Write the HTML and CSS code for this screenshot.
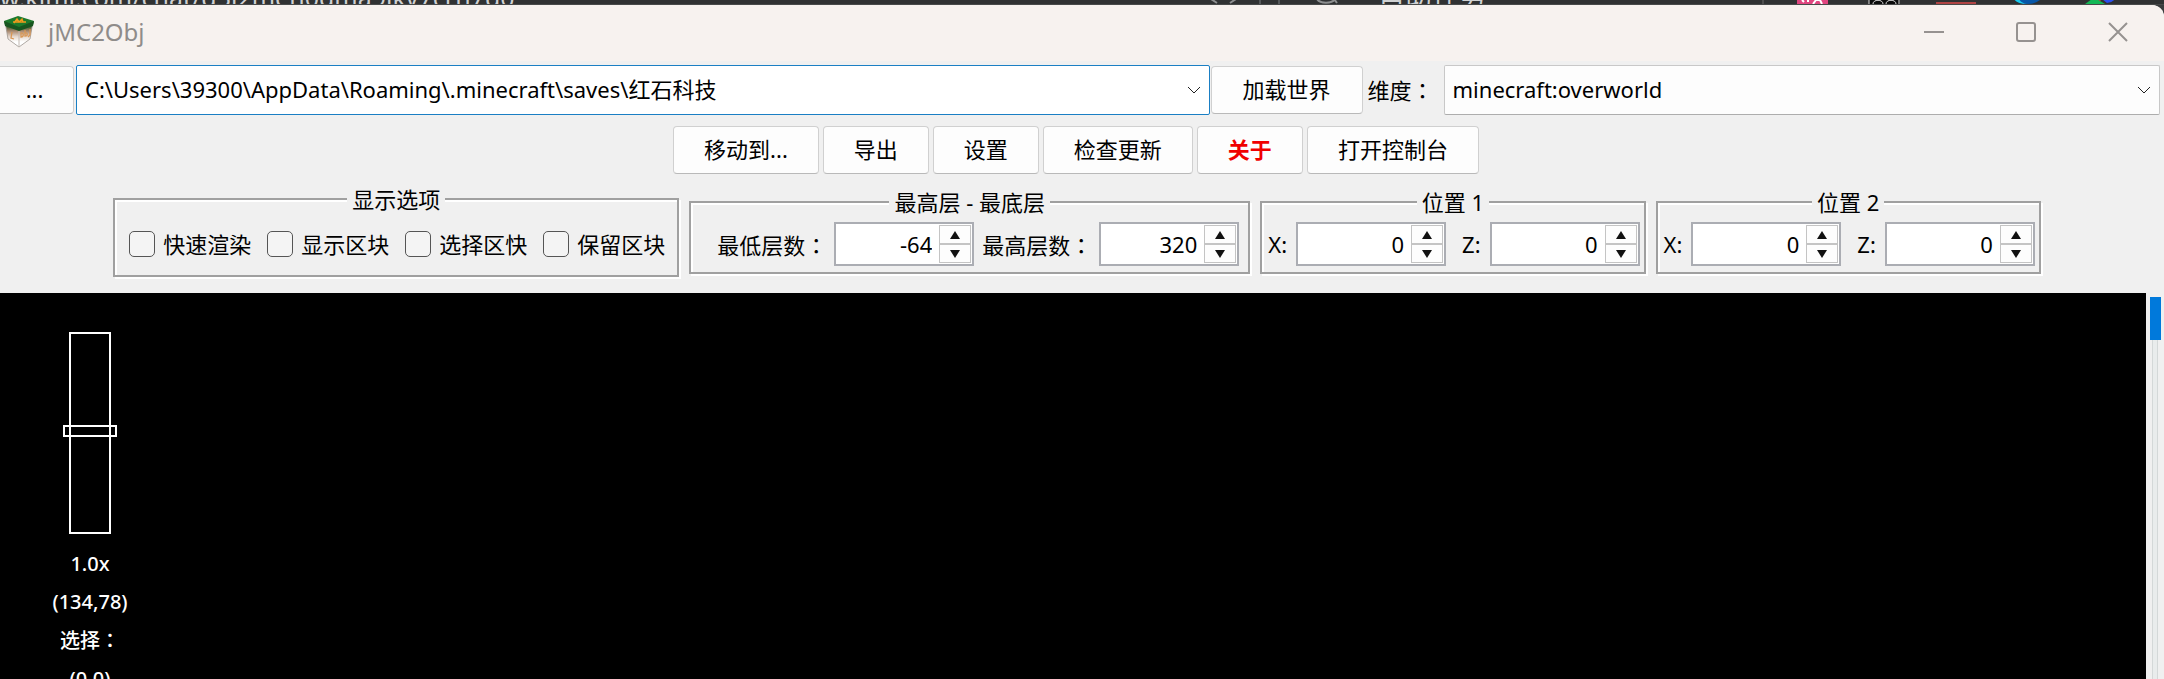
FILE: index.html
```html
<!DOCTYPE html>
<html lang="zh-CN">
<head>
<meta charset="utf-8">
<title>jMC2Obj</title>
<link rel="stylesheet" href="styles.css">
</head>
<body>
<div class="backdrop" aria-hidden="true">
  <span class="backdrop-url">w.kimi.com/chat/d3l2meh0dma9lkv7crh7d0</span>
  <svg class="backdrop-nav" width="134" height="5" viewBox="0 0 134 5">
    <g fill="none" stroke="#8d8f90" stroke-width="2">
      <path d="M1 0l6 4M26 0l-6 4"/>
      <path d="M50 0v5M69 0v5" stroke="#55585a"/>
      <path d="M107 0c3 5 15 5 18 0M124 0l3 4"/>
    </g>
  </svg>
  <span class="backdrop-task">自助任务</span>
  <svg class="backdrop-icons" width="424" height="5" viewBox="0 0 424 5">
    <path d="M23 0v5" stroke="#6a6a6a"/>
    <path fill="#e0457f" d="M57 0h31v5H57z"/>
    <path fill="none" stroke="#fff" stroke-width="2" d="M62 1l2 2M68 0v3M73 5l3-4h4l2 4"/>
    <path fill="#0a0a0a" d="M129 0h31v5h-31z"/>
    <path fill="none" stroke="#ddd" d="M129 0v5M159 0v5M133 5c0-5 10-5 10 0M146 5c0-5 10-5 10 0"/>
    <path fill="#1780e8" d="M202 0h24v1h-24z"/>
    <path fill="#b04444" d="M196 3h40v2h-40z"/>
    <path fill="#0757a8" d="M274 0h27q-5 5-13 5t-14-5z"/>
    <path fill="#18c8ee" d="M274 0h5q2 4 8 5-10 0-13-5z"/>
    <path fill="#13b755" d="M345 5l7-5h5l8 5z"/>
    <path fill="#e04040" d="M357 0h5l-2 2z"/>
    <path fill="#2b4fee" d="M362 0h13q-3 4-8 4z"/>
  </svg>
</div>

<main class="window">
  <header class="titlebar">
    <svg class="app-icon" width="30" height="32" viewBox="0 0 30 32" aria-hidden="true">
      <defs>
        <linearGradient id="side" x1="0" y1="0" x2="0" y2="1">
          <stop offset="0" stop-color="#1a5a22"/>
          <stop offset=".22" stop-color="#3d5a2c"/>
          <stop offset=".38" stop-color="#a8876c"/>
          <stop offset=".6" stop-color="#e6d8ce"/>
          <stop offset=".8" stop-color="#fff"/>
        </linearGradient>
      </defs>
      <path fill="url(#side)" stroke="#9c948e" stroke-width=".8" d="M1 5l14 6 14-6-3 18-11 8-11-8z"/>
      <path fill="#1d7a2c" d="M0 5l14-5 16 5-1 4-14 5L1 9z"/>
      <path fill="#17551f" d="M0 5l15 6 15-6-1 5-14 5L1 10z"/>
      <path fill="none" stroke="#c3bab3" d="M15 15v16"/>
      <path fill="none" stroke="#f09a1c" stroke-width="1.4" d="M10 7l3-4 2 3 3-3 1 3M9 6h13"/>
      <path fill="none" stroke="#d99755" stroke-width="1.3" d="M8 16l-1 6 3 1M17 17c3-1 3 4 0 4zM21 14v6c3 0 3-4 0-3M26 13v6l-2 2"/>
    </svg>
    <h1 class="title">jMC2Obj</h1>
    <div class="window-controls">
      <button class="window-button" type="button" aria-label="最小化"><svg width="20" height="20" viewBox="0 0 20 20"><path d="M0 10h20"/></svg></button>
      <button class="window-button" type="button" aria-label="最大化"><svg width="20" height="20" viewBox="0 0 20 20"><rect x="1" y="1" width="18" height="18" rx="2"/></svg></button>
      <button class="window-button" type="button" aria-label="关闭"><svg width="20" height="20" viewBox="0 0 20 20"><path d="M1 1l18 18M19 1L1 19"/></svg></button>
    </div>
  </header>

  <section class="world-row">
    <button class="button browse" type="button">...</button>
    <div class="combo combo-focused combo-path">
      <select class="combo-select" aria-label="世界路径"><option>C:\Users\39300\AppData\Roaming\.minecraft\saves\红石科技</option></select>
      <svg class="combo-arrow" width="14" height="8" viewBox="0 0 14 8"><path d="M1 1l6 6 6-6"/></svg>
    </div>
    <button class="button load" type="button">加载世界</button>
    <label class="dimension-label" for="dimension">维度<span class="colon" lang="zh-TW">：</span></label>
    <div class="combo combo-dimension">
      <select class="combo-select" id="dimension"><option>minecraft:overworld</option></select>
      <svg class="combo-arrow" width="14" height="8" viewBox="0 0 14 8"><path d="M1 1l6 6 6-6"/></svg>
    </div>
  </section>

  <nav class="actions">
    <button class="button" type="button">移动到...</button>
    <button class="button" type="button">导出</button>
    <button class="button" type="button">设置</button>
    <button class="button" type="button">检查更新</button>
    <button class="button about" type="button">关于</button>
    <button class="button" type="button">打开控制台</button>
  </nav>

  <section class="panels">
    <fieldset class="panel display-panel">
      <legend class="legend">显示选项</legend>
      <div class="checks">
        <label class="check"><input class="check-box" type="checkbox">快速渲染</label>
        <label class="check"><input class="check-box" type="checkbox">显示区块</label>
        <label class="check"><input class="check-box" type="checkbox">选择区快</label>
        <label class="check"><input class="check-box" type="checkbox">保留区块</label>
      </div>
    </fieldset>

    <fieldset class="panel layer-panel">
      <legend class="legend">最高层 - 最底层</legend>
      <div class="fields layer-fields">
        <div class="field layer-field">
          <label for="floor">最低层数<span class="colon" lang="zh-TW">：</span></label>
          <div class="spinner"><input class="spinner-input" id="floor" type="number" value="-64">
            <div class="spinner-buttons">
              <button class="step" type="button" aria-label="增加"><svg width="12" height="8" viewBox="0 0 12 8"><path d="M1 8l5-8 5 8z"/></svg></button>
              <button class="step" type="button" aria-label="减少"><svg width="12" height="8" viewBox="0 0 12 8"><path d="M1 0l5 8 5-8z"/></svg></button>
            </div></div>
        </div>
        <div class="field layer-field">
          <label for="ceiling">最高层数<span class="colon" lang="zh-TW">：</span></label>
          <div class="spinner"><input class="spinner-input" id="ceiling" type="number" value="320">
            <div class="spinner-buttons">
              <button class="step" type="button" aria-label="增加"><svg width="12" height="8" viewBox="0 0 12 8"><path d="M1 8l5-8 5 8z"/></svg></button>
              <button class="step" type="button" aria-label="减少"><svg width="12" height="8" viewBox="0 0 12 8"><path d="M1 0l5 8 5-8z"/></svg></button>
            </div></div>
        </div>
      </div>
    </fieldset>

    <fieldset class="panel position-panel">
      <legend class="legend">位置 1</legend>
      <div class="fields position-fields">
        <div class="field position-field">
          <label for="x1">X:</label>
          <div class="spinner spinner-wide"><input class="spinner-input" id="x1" type="number" value="0">
            <div class="spinner-buttons">
              <button class="step" type="button" aria-label="增加"><svg width="12" height="8" viewBox="0 0 12 8"><path d="M1 8l5-8 5 8z"/></svg></button>
              <button class="step" type="button" aria-label="减少"><svg width="12" height="8" viewBox="0 0 12 8"><path d="M1 0l5 8 5-8z"/></svg></button>
            </div></div>
        </div>
        <div class="field position-field">
          <label for="z1">Z:</label>
          <div class="spinner spinner-wide"><input class="spinner-input" id="z1" type="number" value="0">
            <div class="spinner-buttons">
              <button class="step" type="button" aria-label="增加"><svg width="12" height="8" viewBox="0 0 12 8"><path d="M1 8l5-8 5 8z"/></svg></button>
              <button class="step" type="button" aria-label="减少"><svg width="12" height="8" viewBox="0 0 12 8"><path d="M1 0l5 8 5-8z"/></svg></button>
            </div></div>
        </div>
      </div>
    </fieldset>

    <fieldset class="panel position-panel">
      <legend class="legend">位置 2</legend>
      <div class="fields position-fields">
        <div class="field position-field">
          <label for="x2">X:</label>
          <div class="spinner spinner-wide"><input class="spinner-input" id="x2" type="number" value="0">
            <div class="spinner-buttons">
              <button class="step" type="button" aria-label="增加"><svg width="12" height="8" viewBox="0 0 12 8"><path d="M1 8l5-8 5 8z"/></svg></button>
              <button class="step" type="button" aria-label="减少"><svg width="12" height="8" viewBox="0 0 12 8"><path d="M1 0l5 8 5-8z"/></svg></button>
            </div></div>
        </div>
        <div class="field position-field">
          <label for="z2">Z:</label>
          <div class="spinner spinner-wide"><input class="spinner-input" id="z2" type="number" value="0">
            <div class="spinner-buttons">
              <button class="step" type="button" aria-label="增加"><svg width="12" height="8" viewBox="0 0 12 8"><path d="M1 8l5-8 5 8z"/></svg></button>
              <button class="step" type="button" aria-label="减少"><svg width="12" height="8" viewBox="0 0 12 8"><path d="M1 0l5 8 5-8z"/></svg></button>
            </div></div>
        </div>
      </div>
    </fieldset>
  </section>

  <section class="viewer">
    <div class="map">
      <div class="hud">
        <input class="zoom" type="range" min="0" max="100" value="51" aria-label="缩放">
        <div class="readout">
          <span>1.0x</span>
          <span>(134,78)</span>
          <span>选择<span class="colon" lang="zh-TW">：</span></span>
          <span>(0,0)</span>
        </div>
      </div>
    </div>
    <div class="layer-slider" role="scrollbar" aria-label="层" aria-orientation="vertical" aria-valuenow="100">
      <div class="layer-thumb"></div>
      <div class="layer-track"></div>
    </div>
  </section>
</main>
</body>
</html>
```
FILE: styles.css
```css
* {
  box-sizing: border-box;
}

html {
  height: 100%;
}

body {
  display: flex;
  flex-direction: column;
  height: 100%;
  margin: 0;
  overflow: hidden;
  background: #3a3c3d;
  color: #000;
  font-family: "Noto Sans", "Noto Sans CJK SC", sans-serif;
  font-size: 22px;
  line-height: 30px;
}

button,
input,
select {
  color: inherit;
  font: inherit;
}

svg {
  display: block;
}

.colon {
  font-family: "Noto Sans CJK TC", sans-serif;
}

/* Sliver of the window behind */
.backdrop {
  display: flex;
  flex: none;
  align-items: flex-end;
  height: 5px;
  overflow: hidden;
  background: #303233;
  border-bottom: 1px solid #484a4a;
  color: #cfd1d2;
  font-size: 25px;
  line-height: 14px;
  white-space: nowrap;
}

.backdrop-url {
  flex: 0 0 1210px;
}

.backdrop-nav {
  flex: none;
}

.backdrop-task {
  padding-left: 34px;
  font-size: 27px;
}

.backdrop-icons {
  flex: none;
  margin-left: auto;
}

/* Application window */
.window {
  display: flex;
  flex: 1;
  flex-direction: column;
  min-height: 0;
  overflow: hidden;
  background: #f0f0f0;
  border-top-right-radius: 12px;
}

.titlebar {
  display: flex;
  flex: none;
  align-items: center;
  height: 56px;
  padding: 0 0 2px 4px;
  background: #f7f2ef;
}

.title {
  margin: 0 0 0 14px;
  color: #8f8c8a;
  font-size: 24px;
  font-weight: 400;
}

.window-controls {
  display: flex;
  margin-left: auto;
}

.window-button {
  display: grid;
  place-items: center;
  width: 92px;
  height: 54px;
  padding: 0;
  border: 0;
  background: none;
}

.window-button svg {
  fill: none;
  stroke: #969290;
  stroke-width: 2;
}

.button {
  height: 48px;
  padding: 0 30px 2px;
  border: 1px solid #d0d0d0;
  border-bottom-color: #b9b9b9;
  border-radius: 4px;
  background: #fdfdfd;
  white-space: nowrap;
}

.world-row {
  display: flex;
  flex: none;
  align-items: center;
  padding: 4px 4px 0 0;
}

.browse {
  flex: none;
  width: 74px;
  margin-right: 2px;
  padding: 0 4px 2px 0;
  border-left: 0;
  border-radius: 0 4px 4px 0;
}

.combo {
  display: grid;
  align-items: center;
  height: 50px;
  border: 1px solid #c8c8c8;
  border-bottom-color: #adadad;
  border-radius: 2px;
  background: #fdfdfd;
}

.combo-focused {
  border-color: #1a7fc4;
  background: #fff;
}

.combo-path {
  flex: 1134 1 0;
}

.combo-dimension {
  flex: 716 1 0;
}

.combo-select,
.combo-arrow {
  grid-area: 1 / 1;
}

.combo-select {
  width: 100%;
  height: 48px;
  padding: 0 40px 2px 8px;
  border: 0;
  background: none;
  appearance: none;
}

.combo-arrow {
  justify-self: end;
  margin-right: 8px;
  fill: none;
  stroke: #222;
  pointer-events: none;
}

.load {
  flex: none;
  width: 152px;
  margin-left: 1px;
}

.dimension-label {
  flex: none;
  width: 81px;
  padding: 0 0 2px 5px;
  white-space: nowrap;
}

.actions {
  display: flex;
  flex: none;
  justify-content: center;
  gap: 4px;
  padding: 11px 12px 0 0;
}

.about {
  color: #f00000;
  font-weight: 700;
}

.panels {
  display: flex;
  flex: none;
  align-items: center;
  justify-content: center;
  gap: 10px;
  height: 119px;
  padding: 0 10px 5px 0;
}

.panel {
  min-width: 0;
  margin: 0;
  padding: 0;
  border: 2px solid #a0a0a0;
  box-shadow: 2px 2px 0 #fff, inset 2px 2px 0 #fff;
}

.legend {
  margin: 0 auto;
  padding: 0 5px;
  background: #f0f0f0;
  line-height: 28px;
}

.checks {
  display: flex;
  align-items: center;
  gap: 16px;
  height: 62px;
  padding: 0 12px 0 14px;
}

.check {
  display: flex;
  align-items: center;
  gap: 8px;
  white-space: nowrap;
}

.check-box {
  width: 26px;
  height: 26px;
  margin: 0;
  border: 1px solid #555;
  border-radius: 5px;
  background: #f4f4f4;
  appearance: none;
}

.fields {
  display: flex;
  align-items: center;
  height: 56px;
}

.layer-fields {
  gap: 8px;
  padding: 0 9px 0 26px;
}

.position-fields {
  gap: 16px;
  padding: 0 4px 0 6px;
}

.field {
  display: flex;
  align-items: center;
  white-space: nowrap;
}

.layer-field {
  gap: 7px;
}

.position-field {
  gap: 9px;
}

.spinner {
  display: flex;
  width: 140px;
  height: 44px;
  padding: 1px;
  border: 2px solid #abadb3;
  background: #fff;
}

.spinner-wide {
  width: 150px;
}

.spinner-input {
  flex: 1;
  min-width: 0;
  padding: 0 7px 0 0;
  border: 0;
  background: none;
  text-align: right;
  appearance: textfield;
}

.spinner-input::-webkit-inner-spin-button {
  display: none;
}

.spinner-buttons {
  display: flex;
  flex-direction: column;
  width: 32px;
}

.step {
  display: grid;
  flex: 1;
  place-items: center;
  padding: 0;
  border: 1px solid #c4c4c4;
  background: #fdfdfd;
}

.step svg {
  fill: #111;
}

/* Map preview */
.viewer {
  display: flex;
  flex: 1;
  min-height: 0;
}

.map {
  flex: 1;
  overflow: hidden;
  background: #000;
}

.hud {
  display: flex;
  flex-direction: column;
  align-items: center;
  width: 180px;
  padding-top: 39px;
  color: #fff;
}

.zoom {
  width: 54px;
  height: 202px;
  margin: 0;
  background: none;
  writing-mode: vertical-lr;
  direction: rtl;
  appearance: none;
}

.zoom::-webkit-slider-runnable-track {
  width: 42px;
  height: 202px;
  border: 2px solid #fff;
}

.zoom::-webkit-slider-thumb {
  width: 54px;
  height: 12px;
  margin-left: -8px;
  border: 2px solid #fff;
  background: none;
  appearance: none;
}

.readout {
  display: flex;
  flex-direction: column;
  align-items: center;
  padding-top: 11px;
  font-size: 20px;
  font-weight: 500;
  line-height: 38px;
}

.layer-slider {
  display: flex;
  flex-direction: column;
  align-items: center;
  width: 18px;
  padding-top: 4px;
}

.layer-thumb {
  width: 11px;
  height: 43px;
  background: #0079db;
}

.layer-track {
  flex: 1;
  width: 6px;
  border: solid #d4d8d8;
  border-width: 0 1px;
  background: #e9ecec;
}
```
